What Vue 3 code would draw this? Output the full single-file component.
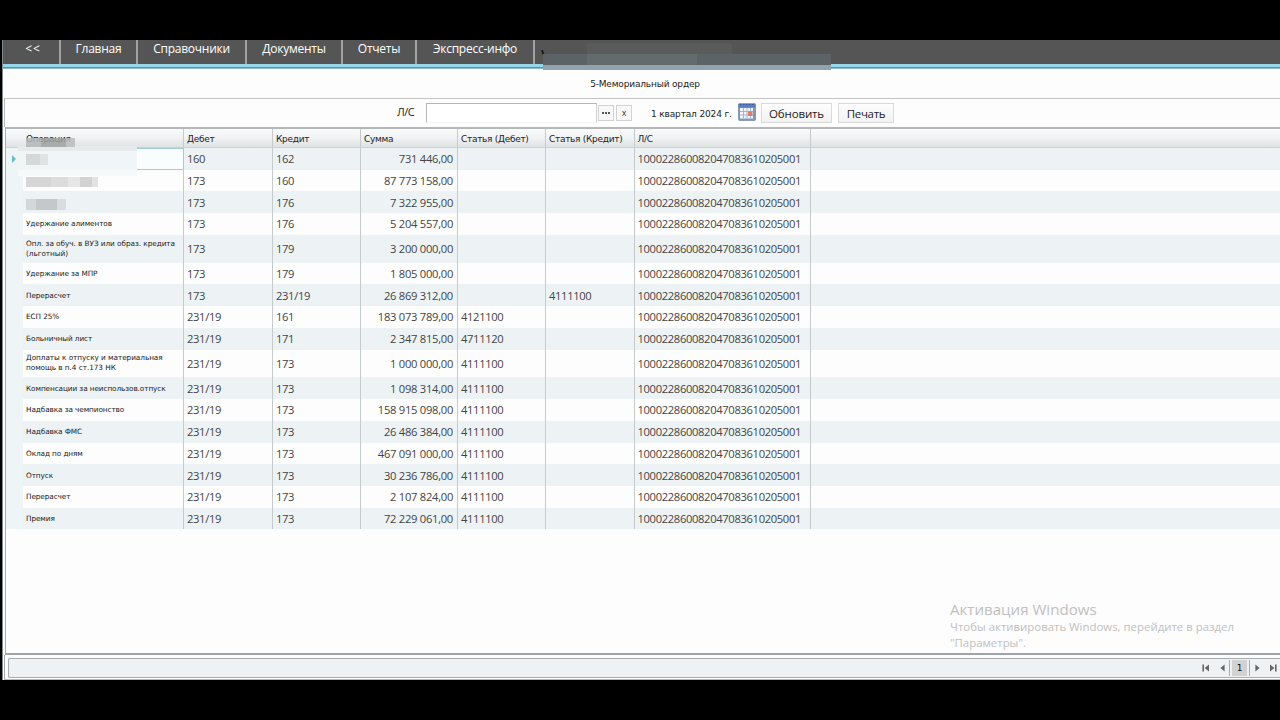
<script setup>
import { ref } from 'vue'

const menu = [
  { title: '<<', width: 58 },
  { title: 'Главная', width: 77 },
  { title: 'Справочники', width: 109 },
  { title: 'Документы', width: 96 },
  { title: 'Отчеты', width: 74 },
  { title: 'Экспресс-инфо', width: 118 }
]

const columns = ['Дебет', 'Кредит', 'Сумма', 'Статья (Дебет)', 'Статья (Кредит)', 'Л/С']

const account = '100022860082047083610205001'

const rows = [
  { name: '', debit: '160', credit: '162', sum: '731 446,00' },
  { name: '', debit: '173', credit: '160', sum: '87 773 158,00' },
  { name: '', debit: '173', credit: '176', sum: '7 322 955,00' },
  { name: 'Удержание алиментов', debit: '173', credit: '176', sum: '5 204 557,00' },
  {
    name: 'Опл. за обуч. в ВУЗ или образ. кредита\n(льготный)',
    debit: '173',
    credit: '179',
    sum: '3 200 000,00',
    tall: true
  },
  { name: 'Удержание за МПР', debit: '173', credit: '179', sum: '1 805 000,00' },
  { name: 'Перерасчет', debit: '173', credit: '231/19', sum: '26 869 312,00', creditItem: '4111100' },
  { name: 'ЕСП 25%', debit: '231/19', credit: '161', sum: '183 073 789,00', debitItem: '4121100' },
  { name: 'Больничный лист', debit: '231/19', credit: '171', sum: '2 347 815,00', debitItem: '4711120' },
  {
    name: 'Доплаты к отпуску и материальная\nпомощь в п.4 ст.173 НК',
    debit: '231/19',
    credit: '173',
    sum: '1 000 000,00',
    debitItem: '4111100',
    tall: true
  },
  { name: 'Компенсации за неиспользов.отпуск', debit: '231/19', credit: '173', sum: '1 098 314,00', debitItem: '4111100' },
  { name: 'Надбавка за чемпионство', debit: '231/19', credit: '173', sum: '158 915 098,00', debitItem: '4111100' },
  { name: 'Надбавка ФМС', debit: '231/19', credit: '173', sum: '26 486 384,00', debitItem: '4111100' },
  { name: 'Оклад по дням', debit: '231/19', credit: '173', sum: '467 091 000,00', debitItem: '4111100' },
  { name: 'Отпуск', debit: '231/19', credit: '173', sum: '30 236 786,00', debitItem: '4111100' },
  { name: 'Перерасчет', debit: '231/19', credit: '173', sum: '2 107 824,00', debitItem: '4111100' },
  { name: 'Премия', debit: '231/19', credit: '173', sum: '72 229 061,00', debitItem: '4111100' }
]

const search = ref('')
const selected = ref(0)
</script>

<template>
  <div class="screen">
    <div class="window">
      <nav class="menu">
        <a v-for="m in menu" :key="m.title" class="menuItem" :style="{ width: m.width + 'px' }">{{ m.title }}</a>
        <span class="userLetter">\</span>
        <div class="userMask"><i></i><b></b></div>
      </nav>

      <div class="body">
        <h1 class="title">5-Мемориальный ордер</h1>

        <div class="toolbar">
          <label class="accLabel">Л/С</label>
          <input v-model="search" class="accInput" />
          <button class="mini dots"><i></i><i></i><i></i></button>
          <button class="mini" @click="search = ''">x</button>
          <span class="period">1 квартал 2024 г.</span>
          <svg class="calendar" width="18" height="18" viewBox="0 0 18 18">
            <rect x="0.5" y="1" width="17" height="16.5" rx="1" fill="#8496b6" stroke="#8a9ab5" />
            <rect x="0.5" y="0.5" width="17" height="4" fill="#5b7dc6" />
            <path d="M2 1.5h14" stroke="#41588c" stroke-dasharray="1.5 1.5" />
            <rect x="2" y="5" width="13" height="10.5" fill="#f1f5fb" />
            <path d="M2 8.5h13M2 12h13M5.5 5v10.5M9 5v10.5M12.5 5v10.5" stroke="#9db5d8" stroke-width="1" />
            <rect x="10" y="8.5" width="4.5" height="4.5" fill="#e27b68" />
          </svg>
          <button class="btn refresh">Обновить</button>
          <button class="btn print">Печать</button>
        </div>

        <div class="grid">
          <div class="row head">
            <div class="cell mark"></div>
            <div class="cell name">Операция</div>
            <div v-for="c in columns" :key="c" class="cell">{{ c }}</div>
          </div>
          <div
            v-for="(r, i) in rows"
            :key="i"
            class="row"
            :class="{ odd: i % 2 === 0, tall: r.tall }"
            @click="selected = i"
          >
            <div class="cell mark"><i v-if="i === selected" class="arrow"></i></div>
            <div class="cell name" :class="{ active: i === selected }">{{ r.name }}</div>
            <div class="cell">{{ r.debit }}</div>
            <div class="cell">{{ r.credit }}</div>
            <div class="cell sum">{{ r.sum }}</div>
            <div class="cell">{{ r.debitItem }}</div>
            <div class="cell">{{ r.creditItem }}</div>
            <div class="cell">{{ account }}</div>
          </div>

          <!-- hidden operation names -->
          <div class="veil"></div>
          <div class="smudge s0"></div>
          <div class="smudge s1"></div>
          <div class="smudge s2"></div>
          <div class="smudge s3"></div>

          <div class="activation">
            <h2>Активация Windows</h2>
            <p>Чтобы активировать Windows, перейдите в раздел<br />"Параметры".</p>
          </div>
        </div>

        <div class="footer">
          <div class="pager">
            <svg class="first" width="8" height="8" viewBox="0 0 8 8"><path d="M0.4 0.5h1.6v7H0.4zM7 0.5v7L2.6 4z" /></svg>
            <svg class="prev" width="5" height="8" viewBox="0 0 5 8"><path d="M4.6 0.5v7L0.4 4z" /></svg>
            <span class="page">1</span>
            <svg class="next" width="5" height="8" viewBox="0 0 5 8"><path d="M0.4 0.5v7L4.6 4z" /></svg>
            <svg class="last" width="8" height="8" viewBox="0 0 8 8"><path d="M6 0.5h1.6v7H6zM1 0.5v7L5.4 4z" /></svg>
          </div>
        </div>
      </div>
    </div>
  </div>
</template>

<style>
body {
  background: #000;
  overflow: hidden;
}
</style>

<style scoped>
* {
  box-sizing: border-box;
}

.screen {
  width: 1280px;
  height: 720px;
  padding: 40px 0;
  background: #000;
  font-family: 'Open Sans', 'Noto Sans', sans-serif;
}

.window {
  height: 640px;
  margin-left: 2px;
  display: flex;
  flex-direction: column;
  border-left: 1px solid #7d8b93;
  background: #fdfdfd;
}

.menu {
  position: relative;
  display: flex;
  flex: none;
  height: 29px;
  background: linear-gradient(#555 0 24px, #98d7ea 24px 27px, #4a99b5 27px 28px, #8fbccc 28px);
}

.menuItem {
  height: 24px;
  border-right: 2px solid #a2a2a2;
  color: #fff;
  font-size: 12px;
  letter-spacing: -0.25px;
  line-height: 18px;
  text-align: center;
  white-space: nowrap;
}

.menuItem:first-child {
  padding-left: 4px;
  letter-spacing: 0.9px;
}

.userLetter {
  padding-left: 6px;
  color: #111;
  font-size: 12px;
  font-weight: bold;
  line-height: 29px;
}

.userMask {
  position: absolute;
  left: 540px;
  top: 14px;
  width: 288px;
  height: 16px;
  background: linear-gradient(#5c6366 0 11px, #91a3af 11px);
}

.userMask i {
  position: absolute;
  left: 44px;
  top: -11px;
  width: 145px;
  height: 11px;
  border-radius: 3px 3px 0 0;
  background: #5a5b5b;
}

.userMask b {
  position: absolute;
  left: 44px;
  top: 0;
  width: 110px;
  height: 11px;
  background: #646b6c;
}

.body {
  flex: 1;
  display: flex;
  flex-direction: column;
  margin-left: 1px;
  min-height: 0;
}

.title {
  flex: none;
  height: 30px;
  margin: 0;
  padding-left: 6px;
  border-bottom: 1px solid #c3c3c3;
  color: #222;
  font-family: 'DejaVu Sans', sans-serif;
  font-size: 9px;
  font-weight: normal;
  letter-spacing: -0.17px;
  line-height: 31px;
  text-align: center;
}

.toolbar {
  flex: none;
  display: flex;
  align-items: center;
  height: 28px;
  padding-left: 392px;
  border-left: 1px solid #bbb;
  color: #222;
}

.accLabel {
  width: 29px;
  padding-bottom: 3px;
  font-size: 11px;
  letter-spacing: -0.5px;
}

.accInput {
  width: 171px;
  height: 20px;
  padding: 0 4px;
  border: 1px solid #d0d0d0;
  border-top-color: #b5b5b5;
  border-left-color: #b5b5b5;
  border-bottom-color: #f4f4f4;
  background: #fff;
  outline: none;
}

.mini {
  display: flex;
  align-items: center;
  justify-content: center;
  width: 16px;
  height: 16px;
  margin-left: 1px;
  padding: 0;
  border: 1px solid #d2d2d2;
  background: #f8f8f8;
  color: #444;
  font-family: 'DejaVu Sans', sans-serif;
  font-size: 8px;
}

.mini + .mini {
  margin-left: 2px;
}

.dots {
  gap: 1px;
}

.dots i {
  width: 2px;
  height: 2px;
  background: #555;
}

.period {
  width: 87px;
  margin-left: 19px;
  padding-top: 2px;
  font-family: 'DejaVu Sans', sans-serif;
  font-size: 9px;
  letter-spacing: -0.15px;
  white-space: nowrap;
}

.calendar {
  margin-top: -2px;
}

.btn {
  height: 20px;
  padding: 0;
  border: 1px solid #dadada;
  background: linear-gradient(#fdfdfd, #f2f2f2);
  color: #222;
  font-family: inherit;
  font-size: 11.5px;
  letter-spacing: -0.3px;
  line-height: 19px;
}

.refresh {
  width: 71px;
  margin-left: 5px;
  letter-spacing: -0.15px;
}

.print {
  width: 56px;
  margin-left: 6px;
}

.grid {
  position: relative;
  flex: 1;
  min-height: 0;
  margin-left: 1px;
  border-top: 2px solid #b4b7b7;
  border-left: 1px solid #a9adb0;
  border-bottom: 2px solid #a0a4a6;
  color: #444;
  font-size: 11.2px;
}

.row {
  display: grid;
  grid-template-columns: 17px 161px 89px 88px 97px 88px 88.5px 176.5px;
  height: 21.71px;
}

.row.tall {
  height: 27.9px;
}

.row.odd {
  background: #edf3f5;
}

.cell {
  display: flex;
  align-items: center;
  padding-left: 3px;
  border-right: 1px solid #c5cbcd;
  letter-spacing: -0.34px;
  white-space: nowrap;
  overflow: hidden;
}

.sum {
  justify-content: flex-end;
  padding-right: 4px;
  letter-spacing: -0.28px;
}

.mark {
  border-right: 0;
  background: #eff4f6;
}

.name {
  padding: 1px 0 0 3px;
  color: #222;
  font-family: 'DejaVu Sans', sans-serif;
  font-size: 7.3px;
  letter-spacing: -0.09px;
  line-height: 10px;
  white-space: pre;
}

.tall .name {
  padding-top: 0;
  letter-spacing: -0.05px;
}

.name.active {
  border: 1px solid #a4cdd2;
  background: #fafdfd;
}

.arrow {
  border: 4px solid transparent;
  border-right: 0;
  border-left: 4px solid #69bccb;
  margin-left: 3px;
}

.head {
  height: 19px;
  border-bottom: 1px solid #ccd2d3;
  background: linear-gradient(#fafbfb, #f0f2f3 50%, #dee3e4);
}

.head .cell {
  padding-top: 1px;
  color: #222;
  font-family: 'DejaVu Sans', sans-serif;
  font-size: 9px;
  letter-spacing: -0.3px;
}

.head .mark {
  background: none;
}

.veil {
  position: absolute;
  left: 12px;
  top: 17px;
  width: 119px;
  height: 30px;
  background: linear-gradient(#e6eaeb 0 5px, #f0f5f7 5px 24px, #f6f9fa 24px);
}

.smudge {
  position: absolute;
  left: 20px;
}

.s0 {
  top: 9px;
  width: 49px;
  height: 9px;
  background: linear-gradient(90deg, #b4b7b8 0 15px, #9ea1a2 15px 40px, #b9bdbe 40px);
  opacity: 0.85;
}

.s1 {
  top: 25px;
  width: 22px;
  height: 11px;
  background: linear-gradient(90deg, #d5d8d9 0 14px, #dfe3e5 14px);
}

.s2 {
  top: 48px;
  width: 72px;
  height: 10px;
  background: linear-gradient(90deg, #d6d6d6 0 25px, #dcdcdc 25px 42px, #e6e6e6 42px 54px, #d2d2d2 54px 66px, #e2e2e2 66px);
}

.s3 {
  top: 70px;
  width: 40px;
  height: 11px;
  background: linear-gradient(90deg, #d3d7d9 0 10px, #c4c8ca 10px 31px, #d8dddf 31px);
}

.activation {
  position: absolute;
  left: 944px;
  top: 470px;
  color: #c0c0c0;
}

.activation h2 {
  margin: 0;
  font-size: 15.1px;
  font-weight: normal;
  line-height: 20px;
}

.activation p {
  margin: 0;
  font-size: 11.42px;
  line-height: 16px;
  white-space: nowrap;
}

.footer {
  flex: none;
  height: 25px;
  padding: 3px 0 2px 3px;
  border-left: 1px solid #aaa;
  border-bottom: 1px solid #b8b8b8;
}

.pager {
  display: flex;
  align-items: center;
  justify-content: flex-end;
  height: 20px;
  padding-right: 3px;
  border: 1px solid #a9adaf;
  border-right: 0;
  border-radius: 2px 0 0 2px;
  background: #eff2f4;
}

.pager path {
  fill: #666;
}

.prev {
  margin-left: 10px;
}

.page {
  width: 21px;
  height: 16px;
  margin: 0 5px 0 4px;
  border: solid #aaa;
  border-width: 0 1px;
  background: #d2d2d2;
  background-clip: content-box;
  padding: 0 2px;
  color: #111;
  font-family: 'DejaVu Sans', sans-serif;
  font-size: 9px;
  line-height: 16px;
  text-align: center;
}

.last {
  margin-left: 9px;
}
</style>
